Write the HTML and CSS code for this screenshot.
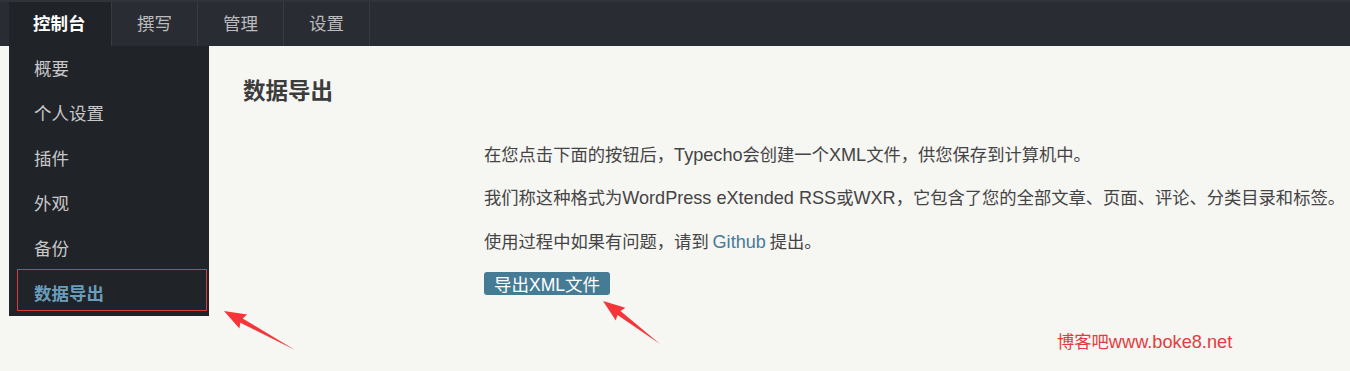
FILE: index.html
```html
<!DOCTYPE html>
<html lang="zh-CN">
<head>
<meta charset="utf-8">
<title>数据导出</title>
<link rel="stylesheet" href="styles.css">
</head>
<body>
<header class="topbar">
  <nav class="tabs">
    <div class="tab tab-active">控制台
      <ul class="dropdown">
        <li class="dd-item">概要</li>
        <li class="dd-item">个人设置</li>
        <li class="dd-item">插件</li>
        <li class="dd-item">外观</li>
        <li class="dd-item">备份</li>
        <li class="dd-item dd-current">数据导出</li>
      </ul>
    </div>
    <div class="tab">撰写</div>
    <div class="tab">管理</div>
    <div class="tab">设置</div>
  </nav>
</header>
<main class="main">
  <h2 class="title">数据导出</h2>
  <div class="desc">
    <p>在您点击下面的按钮后，<span class="latin">Typecho</span>会创建一个<span class="latin">XML</span>文件，供您保存到计算机中。</p>
    <p>我们称这种格式为<span class="latin">WordPress eXtended RSS</span>或<span class="latin">WXR</span>，它包含了您的全部文章、页面、评论、分类目录和标签。</p>
    <p>使用过程中如果有问题，请到 <a class="link latin" href="#">Github</a> 提出。</p>
    <button class="btn" type="button">导出<span class="latin">XML</span>文件</button>
  </div>
</main>
<div class="watermark">博客吧<span class="latin">www.boke8.net</span></div>
<svg class="arrows" width="1350" height="371" viewBox="0 0 1350 371">
  <polygon fill="#f5353a" points="224,311 247.1,314.6 242.7,318.4 295,350 240.3,322.8 239.4,328.6"/>
  <polygon fill="#f5353a" points="603,301 625.4,307.8 620.5,311 660,344 617.5,315 615.8,320.6"/>
</svg>
</body>
</html>
```

FILE: styles.css
```css
html, body {
  margin: 0;
  padding: 0;
}
body {
  background: #f6f6f3;
  font-family: "Liberation Sans", "Noto Sans CJK SC", sans-serif;
  color: #444;
  width: 1350px;
  height: 371px;
  overflow: hidden;
  position: relative;
}
.topbar {
  height: 46px;
  background: #292d33;
  border-top: 2px solid #30343a;
  box-sizing: border-box;
  padding-left: 9px;
}
.tabs {
  display: flex;
  height: 44px;
}
.tab {
  position: relative;
  padding: 0 25px;
  height: 44px;
  line-height: 42px;
  font-size: 17.5px;
  color: #bbb;
  border-right: 1px solid #363a41;
  font-family: "Noto Sans CJK SC", sans-serif;
}
.tab-active {
  background: #202328;
  color: #fff;
  font-weight: bold;
  padding: 0 24px 0 24px;
  width: 54px;
}
.dropdown {
  position: absolute;
  top: 44px;
  left: 0;
  width: 200px;
  margin: 0;
  padding: 0;
  list-style: none;
  background: #202328;
  z-index: 5;
}
.dd-item {
  height: 45px;
  line-height: 44px;
  padding-left: 25px;
  font-size: 17.5px;
  font-weight: normal;
  color: #c8c8c8;
  position: relative;
}
.dd-current {
  color: #6a9dba;
  font-weight: bold;
}
.dd-current::after {
  content: "";
  position: absolute;
  left: 8px;
  right: 2px;
  top: -2px;
  bottom: 5px;
  border: 1px solid #d8393e;
}
.main {
  padding-left: 243px;
  padding-top: 1px;
}
.title {
  margin: 27px 0 0 0;
  font-size: 22.5px;
  line-height: 30px;
  font-weight: bold;
  color: #3c3c3c;
  font-family: "Noto Sans CJK SC", sans-serif;
}
.desc {
  margin-left: 241px;
  margin-top: 28px;
  font-size: 17.3px;
  font-family: "Noto Sans CJK SC", sans-serif;
}
.latin {
  font-family: "Liberation Sans", sans-serif;
  font-size: 18.1px;
}
.desc p {
  margin: 0;
  height: 43px;
  line-height: 43px;
  white-space: nowrap;
}
.desc p:nth-child(2) {
  height: 44px;
}
.link {
  color: #467b96;
  text-decoration: none;
}
.btn {
  margin-top: 10px;
  display: block;
  height: 23px;
  width: 126px;
  padding: 0;
  border: 0;
  border-radius: 3px;
  background: #467b96;
  color: #fff;
  font-family: "Noto Sans CJK SC", sans-serif;
  font-size: 17.5px;
  line-height: 23px;
}
.btn .latin {
  font-size: 17.5px;
}
.watermark {
  position: absolute;
  left: 1057px;
  top: 330px;
  font-size: 17.3px;
  line-height: 22px;
  color: #e53b3e;
  font-family: "Noto Sans CJK SC", sans-serif;
}
.watermark .latin {
  font-size: 18.2px;
}
.arrows {
  position: absolute;
  left: 0;
  top: 0;
  pointer-events: none;
}
```
